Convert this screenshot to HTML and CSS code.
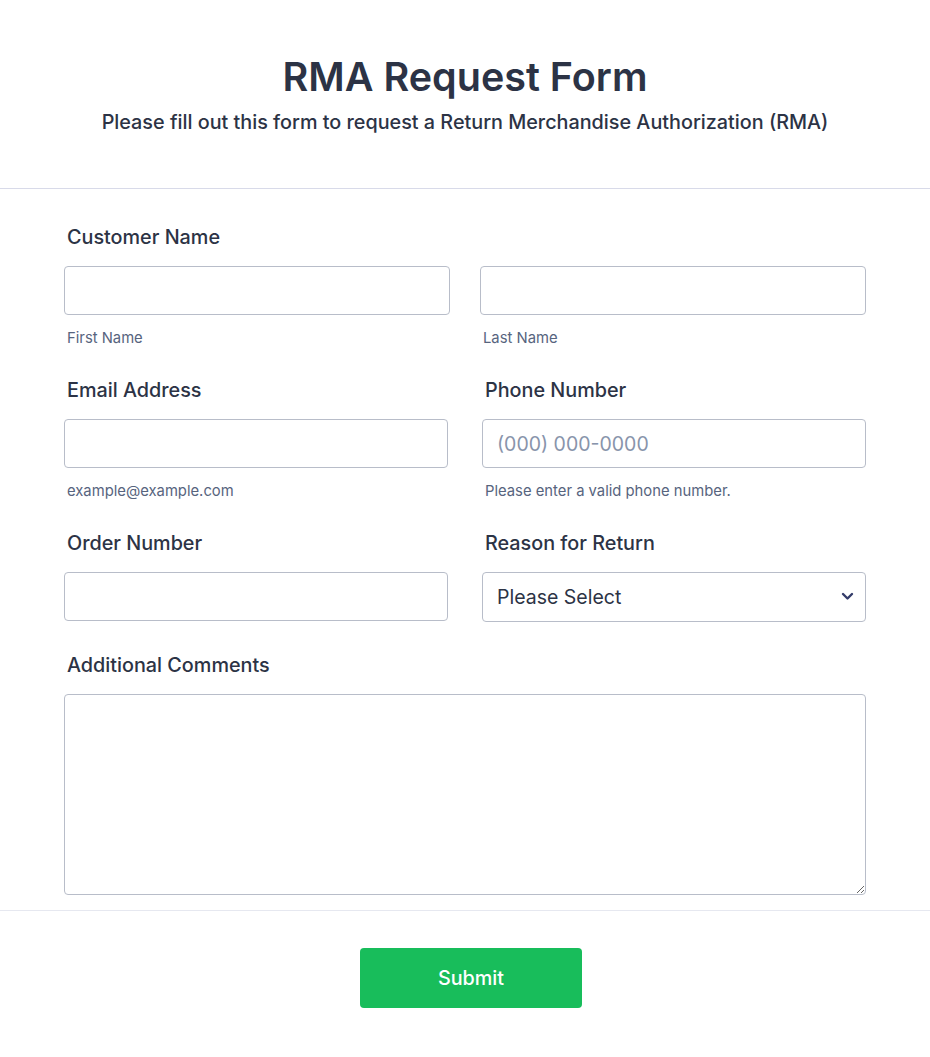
FILE: index.html
```html
<html>
<head>
    <meta charset="utf-8">
    <title>RMA Request Form</title>
    <link rel="stylesheet" href="styles.css">
</head>
<body>

<div class="header">
    <h1 class="title">RMA Request Form</h1>
    <div class="subtitle">Please fill out this form to request a Return Merchandise Authorization (RMA)</div>
</div>

<form class="form">
    <div class="field">
        <label class="label">Customer Name</label>
        <div class="pair">
            <div>
                <input class="input" type="text">
                <div class="sublabel">First Name</div>
            </div>
            <div>
                <input class="input" type="text">
                <div class="sublabel">Last Name</div>
            </div>
        </div>
    </div>

    <div class="row">
        <div class="field">
            <label class="label">Email Address</label>
            <input class="input" type="email">
            <div class="sublabel">example@example.com</div>
        </div>
        <div class="field">
            <label class="label">Phone Number</label>
            <input class="input" type="tel" placeholder="(000) 000-0000">
            <div class="sublabel">Please enter a valid phone number.</div>
        </div>
    </div>

    <div class="row">
        <div class="field">
            <label class="label">Order Number</label>
            <input class="input" type="text">
        </div>
        <div class="field">
            <label class="label">Reason for Return</label>
            <div class="selectWrap">
                <select class="input select">
                    <option>Please Select</option>
                    <option>Defective item</option>
                    <option>Wrong item shipped</option>
                    <option>Other</option>
                </select>
                <svg class="chevron" width="13" height="9" viewBox="0 0 13 9">
                    <path d="M2 2 L6.5 6.5 L11 2" fill="none" stroke="#343c6a" stroke-width="2.4" stroke-linecap="round" stroke-linejoin="round"/>
                </svg>
            </div>
        </div>
    </div>

    <div class="field">
        <label class="label">Additional Comments</label>
        <textarea class="input textarea"></textarea>
    </div>
</form>

<div class="footer">
    <button class="submit" type="button">Submit</button>
</div>

</body>
</html>
```

FILE: styles.css
```css
body {
    margin: 0;
    background: #fff;
    font-family: Inter, "Noto Sans", Arial, sans-serif;
    color: #2c3345;
}

.header {
    text-align: center;
    padding: 53px 20px 54px 20px;
    border-bottom: 1px solid #d8dae9;
}
.title {
    margin: 0;
    font-size: 39.5px;
    line-height: 48px;
    font-weight: 600;
}
.subtitle {
    margin-top: 9px;
    font-size: 19.8px;
    line-height: 24px;
    font-weight: 500;
}

.form {
    width: 802px;
    margin: 0 auto;
    padding: 36px 0 15px 0;
    display: flex;
    flex-direction: column;
    gap: 31px;
}
.row {
    display: grid;
    grid-template-columns: 1fr 1fr;
    gap: 34px;
}
.pair {
    display: grid;
    grid-template-columns: 1fr 1fr;
    gap: 30px;
}
.field { min-width: 0; }

.label {
    display: block;
    padding-left: 3px;
    font-size: 19.8px;
    line-height: 24px;
    font-weight: 500;
    margin-bottom: 17px;
}
.input {
    display: block;
    box-sizing: border-box;
    width: 100%;
    height: 49px;
    margin: 0;
    padding: 0 14px;
    border: 1px solid #b8bdc9;
    border-radius: 4px;
    background: #fff;
    font-family: Inter, "Noto Sans", Arial, sans-serif;
    font-size: 19.5px;
    color: #2c3345;
    outline: none;
}
.input::placeholder { color: #8894ab; }

.sublabel {
    margin-top: 15px;
    padding-left: 3px;
    font-size: 14.8px;
    line-height: 17px;
    color: #57647e;
}

.selectWrap { position: relative; }
.select {
    appearance: none;
    -webkit-appearance: none;
    height: 50px;
}
.chevron {
    position: absolute;
    right: 12px;
    top: 20px;
    pointer-events: none;
}

.textarea {
    height: 201px;
    padding: 12px 14px;
    resize: vertical;
}

.footer {
    border-top: 1px solid #e6e8f0;
    padding: 37px 0 0 12px;
    text-align: center;
}
.submit {
    width: 222px;
    height: 60px;
    border: none;
    border-radius: 4px;
    background: #18bd5b;
    color: #fff;
    font-family: Inter, "Noto Sans", Arial, sans-serif;
    font-size: 19.8px;
    font-weight: 500;
}
```
